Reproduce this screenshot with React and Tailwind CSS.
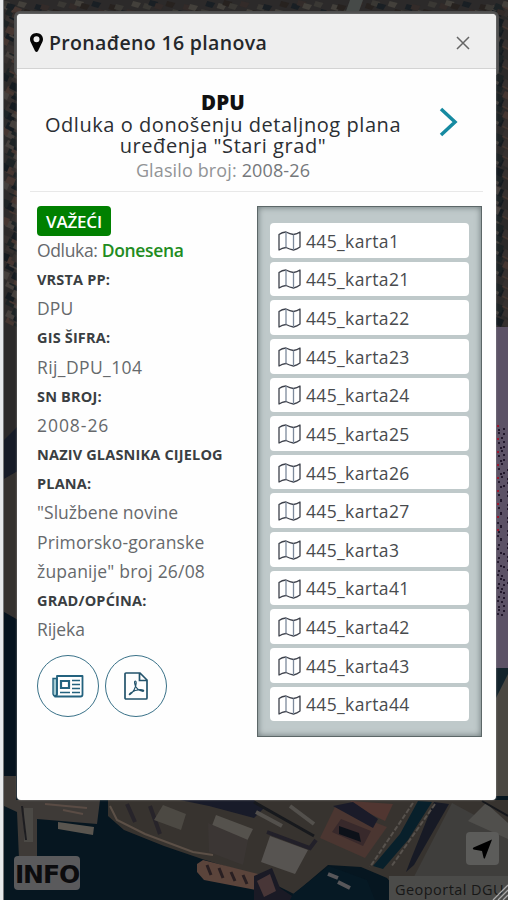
import React from 'react';

const maps = ['1', '21', '22', '23', '24', '25', '26', '27', '3', '41', '42', '43', '44'];

const specks = Array.from({ length: 90 }, (_, i) => ({
  x: 497 + ((i * i * 7 + i * 3) % 11),
  y: 425 + ((i * 53) % 190),
  red: i % 11 === 0,
}));

const blocks = Array.from({ length: 220 }, (_, i) => ({
  x: i % 2 ? 493 + ((i * i * 3) % 15) : 2 + ((i * i * 5) % 14),
  y: (i * 47) % 320,
  shade: ['#45403d', '#151b20', '#35302f', '#453631', '#1d2325'][i % 5],
}));

const roofs = Array.from({ length: 90 }, (_, i) => ({
  x: 2 + i * 5.7,
  y: (i * i * 3) % 13,
  shade: ['#3a3834', '#191f24', '#332b29', '#43403b', '#27221f'][i % 5],
}));

function MapBackground() {
  return (
    <svg className="absolute inset-0" width="508" height="900" viewBox="0 0 508 900">
      <rect width="508" height="900" fill="#2c2a2a" />
      {blocks.map((b, i) => (
        <path key={i} d={`M${b.x} ${b.y}l8 3l-3 7l-8 -4z`} fill={b.shade} />
      ))}
      {roofs.map((b, i) => (
        <path key={i} d={`M${b.x} ${b.y}l8 2l-3 5l-7 -2z`} fill={b.shade} />
      ))}
      <path d="M350 0h13l-5 14h-13z" fill="#464a48" />
      <path d="M4 440l14-14v45l-14 8z" fill="#171c28" />
      <path d="M4 479l14-8v149l-14-8z" fill="#353230" />
      <path d="M4 612l14 8v280H4z" fill="#06131e" />

      <rect x="496" y="327" width="12" height="341" fill="#5c5266" />
      {specks.map((s, i) => (
        <rect key={i} x={s.x} y={s.y} width="2" height="2" fill={s.red ? '#97142c' : '#22182c'} />
      ))}
      <path d="M495 668h13v20l-13 22z" fill="#13232c" />
      <path d="M508 674v140h-13V700z" fill="#4a4742" />

      <rect x="4" y="796" width="504" height="104" fill="#061620" />
      <path d="M4 776h12v24h84l-3 24-60-5v40H19l-2-47-13-6z" fill="#3e3a37" />
      <path d="M24 808h9v34h-9z" fill="#4b4945" />
      <path d="M22 806l4 34" stroke="#1d1d20" strokeWidth="2" />
      <path d="M58 822l36 5-1 8-35-6z" fill="#59554f" />
      <path d="M63 810l20 4M45 804l42 4" stroke="#5a4c45" strokeWidth="2" />
      <path
        d="M108 800h400v100H405l-18-22-26-11-33-2-34 29-36-18-56-17-38-13-40-16-16-14z"
        fill="#37332f"
      />
      <path d="M110 806l7 14 28 14 48 18 20 3" fill="none" stroke="#5c5047" strokeWidth="2" />
      <path d="M127 804l8 18M150 806l10 28" stroke="#27242a" strokeWidth="4" />
      <path d="M180 800h74l10 8-10 10-45-12z" fill="#181b29" />
      <path d="M216 815l37 14-8 16-35-14z" fill="#55524d" />
      <path d="M163 805l23 9-5 16-27-10z" fill="#4c4943" />
      <path d="M208 823l40 17-5 25-34-13z" fill="#3b3634" />
      <path d="M197 864l6-4 55 14 12 12-4 6-62-12-7-8z" fill="#5b443b" />
      <path d="M207 865l4 10M219 868l4 10M231 872l4 9M243 875l4 9" stroke="#291f22" strokeWidth="3" />
      <path d="M254 802l60 34" stroke="#17191d" strokeWidth="3" />
      <path d="M256 812l26 14M290 806l24 18" stroke="#53504c" strokeWidth="4" />
      <path d="M270 836l38 14-13 24-34-12z" fill="#575451" />
      <path d="M267 832l43 16 6-8" fill="none" stroke="#222029" strokeWidth="4" />
      <path d="M335 807l52 20-22 31-45-20z" fill="#4b3631" />
      <path d="M341 819l30 12-8 15-31-14z" fill="#38292b" />
      <path d="M339 826l20 7 2 9-22-8z" fill="#0c1119" />
      <path d="M350 801l43 3-8 17-25-12z" fill="#513631" />
      <path d="M333 806l20-4 25 17-5 9z" fill="#1a1b29" />
      <path d="M418 801l14 1-24 38-25 29-10-3 27-32z" fill="#08202b" />
      <path d="M434 802l15 2-35 61-8 7 5-13z" fill="#171a25" />
      <path d="M413 803l-43 64M435 804l-44 63" stroke="#57524d" strokeWidth="2" strokeDasharray="5 2" />
      <path d="M452 803l56 30v67H402z" fill="#3f3e3c" />
      <path d="M486 803l22 20v16l-40-18z" fill="#504f4c" />
      <path d="M482 801l26 15" stroke="#15171b" strokeWidth="2" />
      <path d="M254 876l18-8 8 20 18 12h-44z" fill="#1a1a25" />
      <path d="M257 881l13-7 6 17-12 6z" fill="#483637" />
      <path d="M293 894l36-28 38 14 8 20h-85z" fill="#061924" />
      <path d="M328 874l10 4M338 882l12 6" stroke="#58575a" strokeWidth="4" />
    </svg>
  );
}

function MarkerIcon() {
  return (
    <svg className="mt-[3px]" width="13" height="19" viewBox="0 0 13 19">
      <path
        d="M6.500 0C2.800 0 0 2.800 0 6.300c0 1.200.3 2.200.9 3.200L5 18q1.500 1.800 3 0l4.100-8.500c.6-1 .9-2 .9-3.200C13 2.800 10.200 0 6.500 0zm0 3.200a3 3 0 1 1 0 6 3 3 0 0 1 0-6z"
        fill="#050505"
        fillRule="evenodd"
      />
    </svg>
  );
}

function MapIcon() {
  return (
    <svg width="23" height="20" viewBox="0 0 23 20" fill="none" stroke="#3d414b" strokeWidth="1.3">
      <path
        d="M1 3.500Q4 1.200 8 1q4 2 7.500 2.500Q19 3 22 1v15q-3 2.300-6.500 3-4-.7-7.500-2.500-4 .5-7 2.500z"
        strokeLinejoin="round"
      />
      <path d="M8 1v15.500M15.500 3.500V19" stroke="#7d8a9c" />
    </svg>
  );
}

function NewspaperIcon() {
  return (
    <svg width="32" height="23" viewBox="0 0 32 23" fill="none" stroke="#23627e" strokeWidth="1.8">
      <path d="M1 3.500h4V19q-.5 2-2 2t-2-2z" fill="#a5cbd3" strokeWidth="1.4" />
      <path d="M5 1h25.500v18.500q0 2-2 2H3q2-.5 2-3z" strokeLinejoin="round" />
      <path d="M9 6h8v7H9z" strokeWidth="2.200" />
      <path d="M20 5.500h8M20 9.500h8M20 13.500h8M8 17.500h10M20 17.500h8" strokeWidth="1.500" />
    </svg>
  );
}

function PdfIcon() {
  return (
    <svg width="24" height="28" viewBox="0 0 24 28" fill="none" stroke="#23536b" strokeWidth="1.7">
      <path d="M2 1h14l7 7v18q0 1-1 1H2q-1 0-1-1V2q0-1 1-1zM15.500 1v7.500H23" />
      <path
        d="M11.500 9c-1.500 0-1 3 .5 6 1.500 2.500 4 4 7 4.300 1 0 1-1.300-.5-1.500-3.500-.7-8 .2-12 3.200-1.500 1.200-1.500 2-.5 1.500 3-2 6-7 6.200-11.500 0-1.500-.2-2-.7-2z"
        strokeWidth="1.2"
      />
    </svg>
  );
}

function Label({ children }) {
  return <dt className="text-[14.5px] font-bold tracking-[0.17px] text-[#3a3e42]">{children}</dt>;
}

function Value({ className = 'tracking-[0.15px]', children }) {
  return <dd className={`text-[17.5px] text-[#66696c] ${className}`}>{children}</dd>;
}

export default function App() {
  return (
    <div className="relative h-[900px] w-[508px] overflow-hidden font-['Open_Sans',sans-serif]">
      <MapBackground />
      <div className="absolute inset-y-0 left-0 w-1 border-r border-[#77797b] bg-[#e8eaec]" />

      <button className="absolute left-[14px] top-[856px] h-[34px] w-[66px] rounded bg-[#5a5a5c] font-['DejaVu_Sans',sans-serif] text-[25px] font-bold leading-[37px] tracking-[-1.1px] text-[#0c0c0e]">
        INFO
      </button>
      <button className="absolute left-[466px] top-[832px] h-[33px] w-[33px] rounded-sm bg-[#5c5c5a]">
        <svg width="33" height="33" viewBox="0 0 33 33">
          <path d="M26 7.500L19 26q-1 1.500-1.500-.5L16 19l-8.500-1.500q-1.500-1 0-2z" fill="#000" />
        </svg>
      </button>
      <div className="absolute bottom-0 right-0 h-[24px] w-[119px] whitespace-nowrap bg-[#4b4b49] pl-[6px] text-[14.5px] leading-[28px] tracking-[0.45px] text-[#171717]">
        Geoportal DGU
      </div>
      <svg className="absolute bottom-0 right-0" width="16" height="16" viewBox="0 0 16 16">
        <path d="M1 16L16 1M6 16L16 6M11 16l5-5" stroke="#aaa" strokeWidth="1.3" />
      </svg>

      <div className="absolute left-[14px] top-[11px] h-[65px] w-[485px] rounded-md bg-[#4e4e4e]" />
      <div className="absolute left-[17px] top-[14px] flex h-[786px] w-[479px] flex-col overflow-hidden rounded bg-[#fefefe] shadow-[0_0_2px_#999]">
        <header className="flex h-[55px] shrink-0 items-center border-b border-[#d3d3d3] bg-[#eee] pl-[13px] pr-[26px]">
          <MarkerIcon />
          <h1 className="ml-[6px] mt-[3px] whitespace-nowrap text-[19.5px] font-semibold tracking-[0.35px] text-[#24272a]">
            Pronađeno 16 planova
          </h1>
          <svg className="ml-auto mt-[3px]" width="14" height="14" viewBox="0 0 14 14" stroke="#666" strokeWidth="1.5">
            <path d="M1 1l12 12M13 1L1 13" />
          </svg>
        </header>

        <section className="mx-[13px] flex h-[123px] shrink-0 border-b border-[#e8e8e8] pt-[23px]">
          <div className="w-[386px] whitespace-nowrap text-center text-[20px] leading-[21.5px] text-[#2b2f33]">
            <p className="text-[20.5px] font-extrabold tracking-[0.2px] text-[#111]">DPU</p>
            <h2 className="font-medium tracking-[0.56px]">
              Odluka o donošenju detaljnog plana
              <br />
              uređenja "Stari grad"
            </h2>
            <p className="mt-[3px] text-[18px] tracking-[0.13px] text-[#929496]">
              Glasilo broj: <span className="text-[#75787b]">2008-26</span>
            </p>
          </div>
          <svg className="ml-[23px] mt-[15px]" width="20" height="30" viewBox="0 0 20 30" fill="none" stroke="#168aa1" strokeWidth="3.5">
            <path d="M2 2l14 13L2 28" />
          </svg>
        </section>

        <section className="flex justify-between pl-[20px] pr-[14px] pt-[14px]">
          <div className="w-[205px]">
            <div className="flex h-[30px] w-[74px] items-center justify-center rounded bg-[#008000] pt-[2px] text-[17px] font-semibold tracking-[-0.2px] text-white">
              VAŽEĆI
            </div>
            <dl className="whitespace-nowrap leading-[29.15px]">
              <Value className="tracking-[-0.35px]">
                Odluka: <span className="font-semibold text-[#218c21]">Donesena</span>
              </Value>
              <Label>VRSTA PP:</Label>
              <Value>DPU</Value>
              <Label>GIS ŠIFRA:</Label>
              <Value className="tracking-[0.4px]">Rij_DPU_104</Value>
              <Label>SN BROJ:</Label>
              <Value className="tracking-[0.95px]">2008-26</Value>
              <Label>
                NAZIV GLASNIKA CIJELOG
                <br />
                PLANA:
              </Label>
              <Value>
                <span className="tracking-[0.03px]">"Službene novine</span>
                <br />
                Primorsko-goranske
                <br />
                <span className="tracking-[0.2px]">županije" broj 26/08</span>
              </Value>
              <Label>GRAD/OPĆINA:</Label>
              <Value className="tracking-[-0.1px]">Rijeka</Value>
            </dl>
            <div className="mt-[11px] flex gap-[6px]">
              <button className="flex size-[62px] items-center justify-center rounded-full border border-[#397188]">
                <NewspaperIcon />
              </button>
              <button className="flex size-[62px] items-center justify-center rounded-full border border-[#397188]">
                <PdfIcon />
              </button>
            </div>
          </div>

          <ul className="flex h-[531px] w-[225px] flex-col gap-1 border border-[#5c6768] bg-[#bfc9ca] px-[12px] pt-[16px] shadow-[inset_0_0_6px_#697576]">
            {maps.map((id) => (
              <li
                key={id}
                className="flex h-[34.65px] shrink-0 items-center gap-[5px] rounded-sm bg-white pl-[8px] pt-px text-[17.5px] tracking-[0.35px] text-[#484b4e]"
              >
                <MapIcon />
                <span>445_karta{id}</span>
              </li>
            ))}
          </ul>
        </section>
      </div>
    </div>
  );
}
